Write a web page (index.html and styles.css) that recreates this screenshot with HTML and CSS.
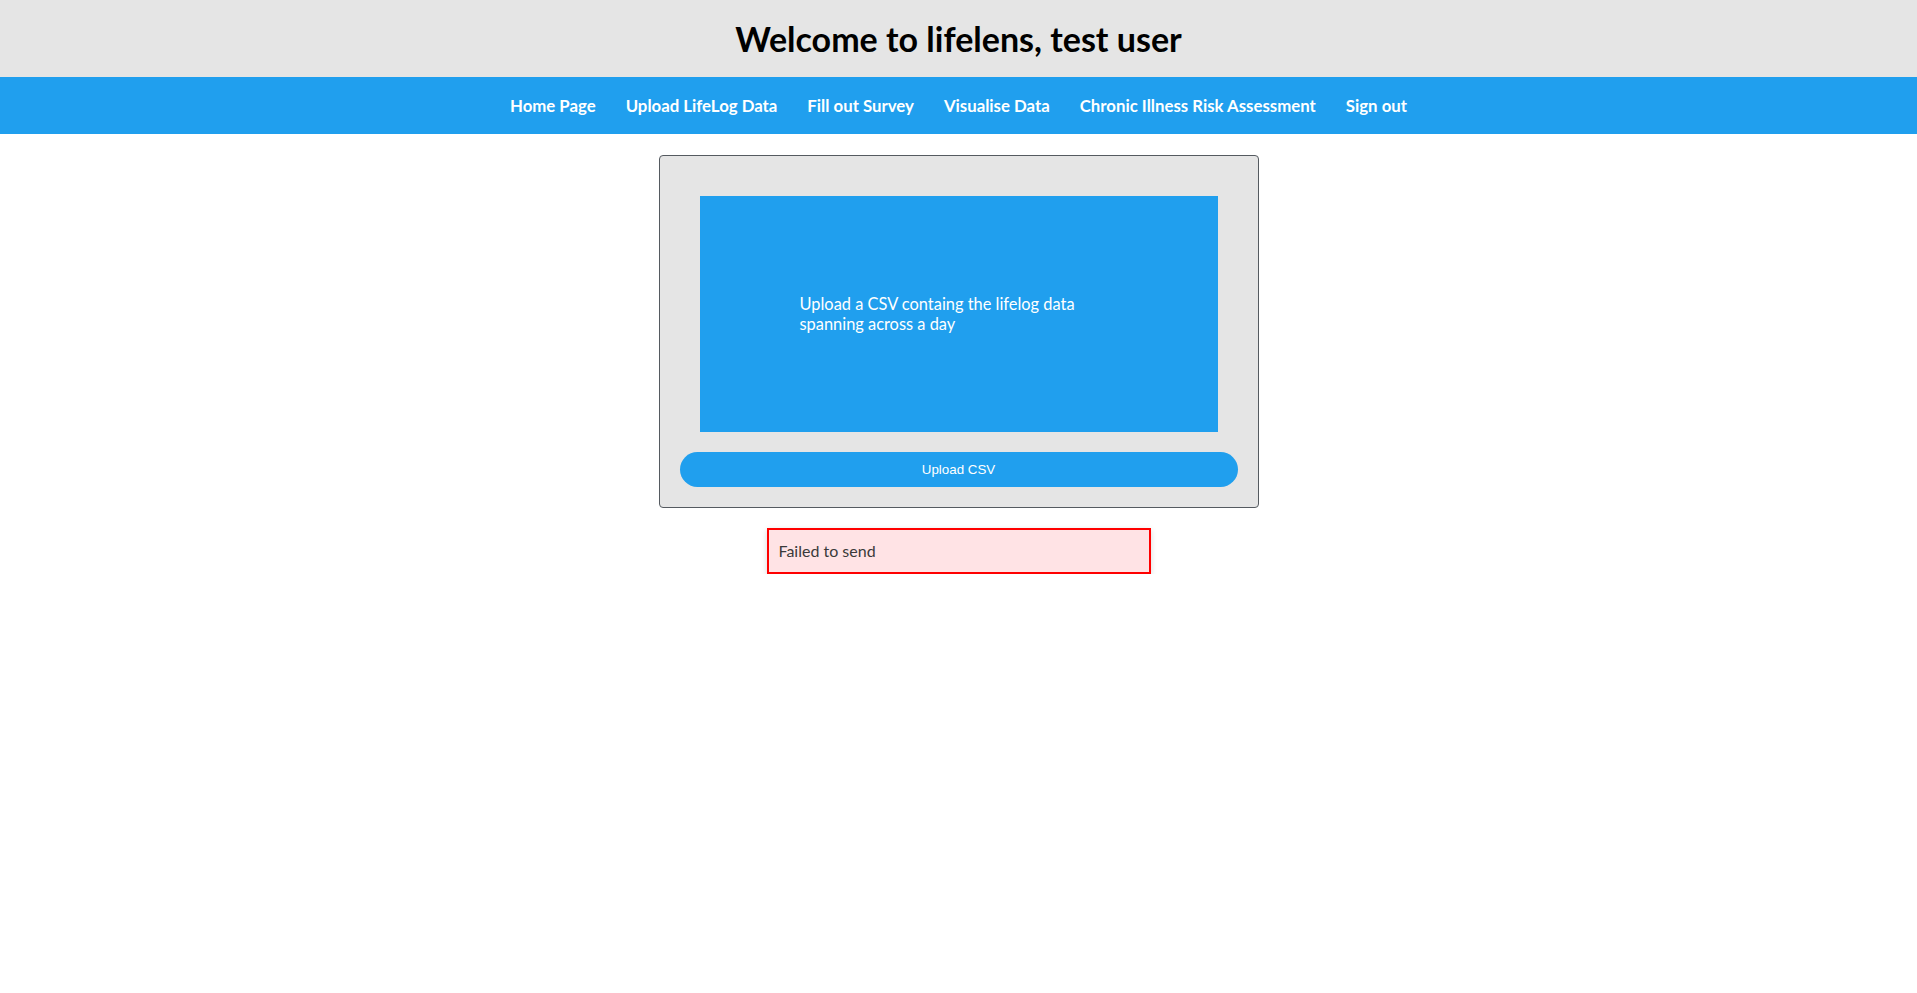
FILE: index.html
```html
<!DOCTYPE html>
<html lang="en">
<head>
<meta charset="utf-8">
<title>lifelens</title>
<link rel="stylesheet" href="styles.css">
</head>
<body>
  <header class="site-header">
    <h1 class="site-title">Welcome to lifelens, test user</h1>
  </header>
  <nav class="main-nav">
    <a class="nav-link" href="#">Home Page</a>
    <a class="nav-link" href="#">Upload LifeLog Data</a>
    <a class="nav-link" href="#">Fill out Survey</a>
    <a class="nav-link" href="#">Visualise Data</a>
    <a class="nav-link" href="#">Chronic Illness Risk Assessment</a>
    <a class="nav-link" href="#">Sign out</a>
  </nav>
  <main class="content">
    <section class="upload-card">
      <div class="dropzone">
        <p class="dropzone-text">Upload a CSV containg the lifelog data spanning across a day</p>
      </div>
      <button class="upload-btn" type="button">Upload CSV</button>
    </section>
    <div class="error-box">Failed to send</div>
  </main>
</body>
</html>
```

FILE: styles.css
```css
* { box-sizing: border-box; }

html, body {
  margin: 0;
  padding: 0;
  background: #ffffff;
  font-family: Lato, "Noto Sans", sans-serif;
}

.site-header {
  height: 77px;
  background: #e5e5e5;
  display: flex;
  align-items: center;
  justify-content: center;
}

.site-title {
  margin: 0;
  font-size: 34px;
  font-weight: 700;
  color: #000;
  line-height: 1;
}

.main-nav {
  height: 57px;
  background: #209fee;
  display: flex;
  align-items: center;
  justify-content: center;
  gap: 30px;
}

.nav-link {
  color: #ffffff;
  text-decoration: none;
  font-weight: 700;
  font-size: 16.8px;
}

.content {
  display: flex;
  flex-direction: column;
  align-items: center;
  padding-top: 21px;
}

.upload-card {
  width: 600px;
  background: #e5e5e5;
  border: 1px solid #555a60;
  border-radius: 4px;
  padding: 20px;
  display: flex;
  flex-direction: column;
}

.dropzone {
  margin: 20px;
  height: 236px;
  background: #209fee;
  display: flex;
  align-items: center;
  padding: 0 100px;
}

.dropzone-text {
  margin: 0;
  color: #ffffff;
  font-size: 16.4px;
  line-height: 20px;
}

.upload-btn {
  height: 35px;
  border: none;
  border-radius: 18px;
  background: #209fee;
  color: #ffffff;
  font-family: "Liberation Sans", Arial, sans-serif;
  font-size: 13.33px;
  cursor: pointer;
}

.error-box {
  margin-top: 20px;
  width: 384px;
  height: 46px;
  border: 2px solid #ff0000;
  background: #ffe3e5;
  color: #3a3a3a;
  font-size: 16px;
  line-height: 22px;
  padding: 10px 10px;
  box-shadow: 0 2px 6px rgba(0, 0, 0, 0.15);
}
```
